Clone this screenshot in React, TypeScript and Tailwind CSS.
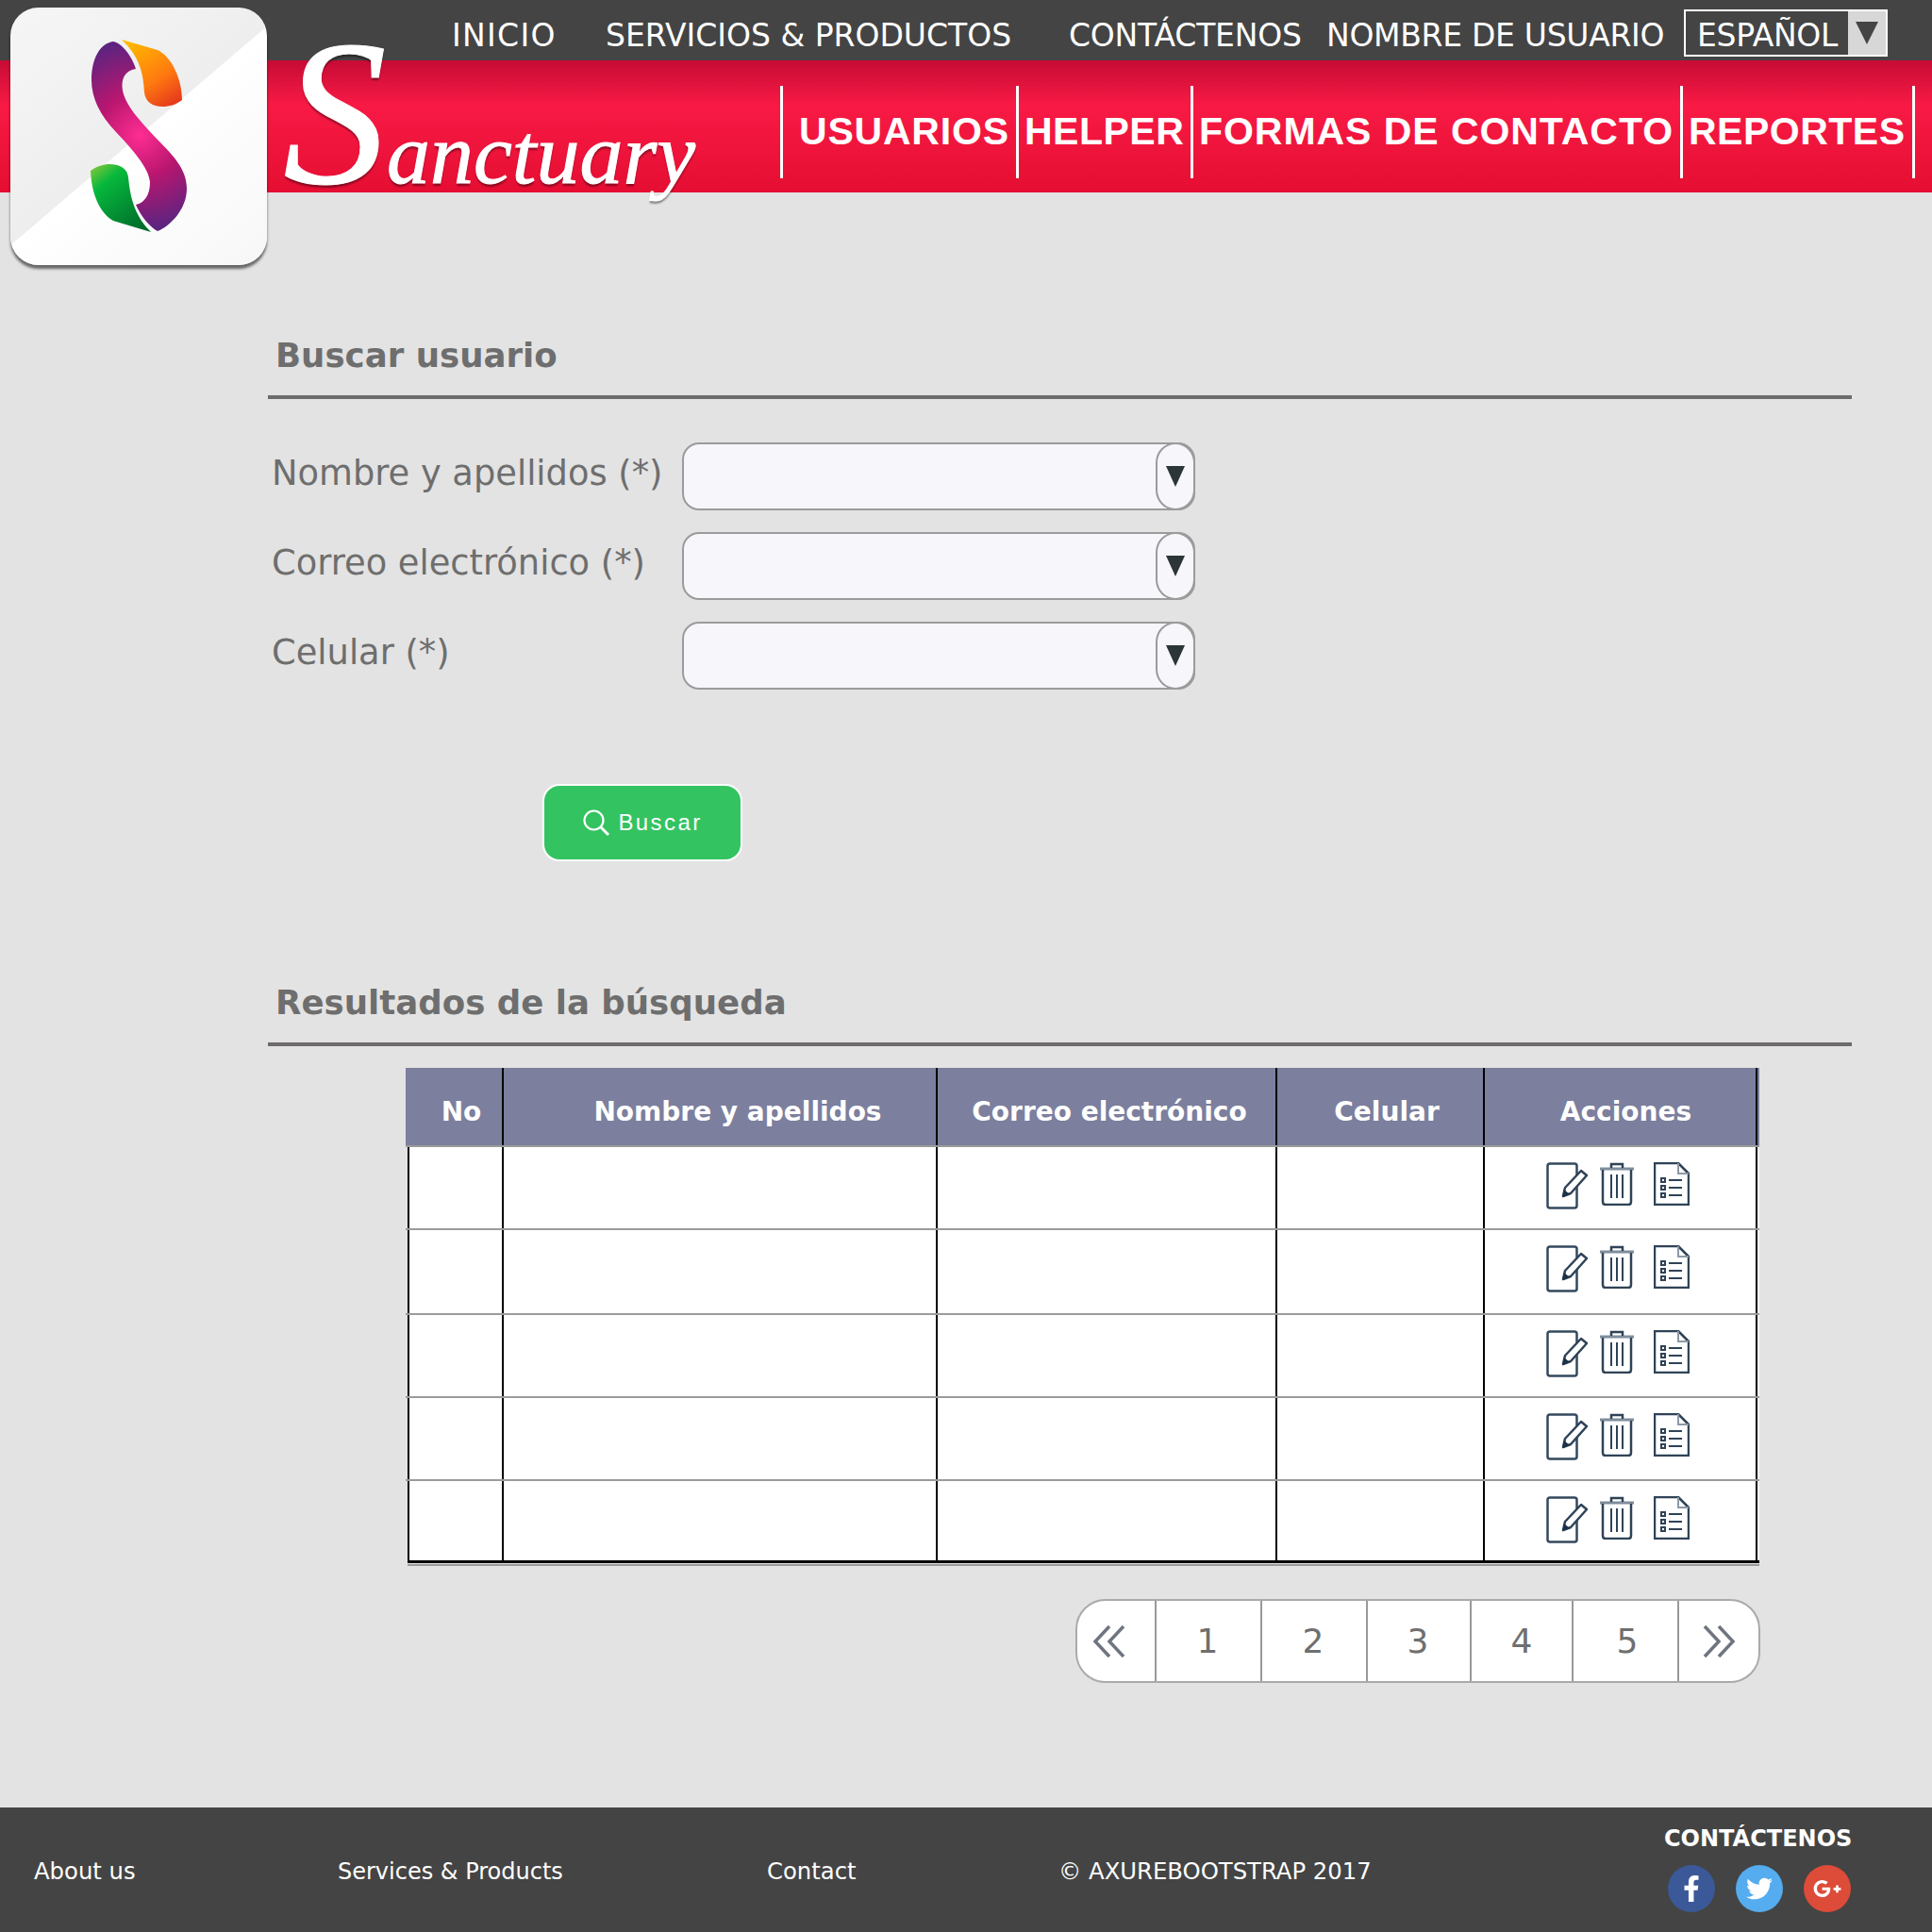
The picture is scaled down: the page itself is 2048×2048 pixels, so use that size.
import React from 'react';
import { FaFacebookF, FaTwitter, FaGooglePlusG } from 'react-icons/fa';

const sans = "font-['DejaVu_Sans',sans-serif]";

const LogoCard = () => (
  <div className="absolute left-[11px] top-[8px] w-[272px] h-[273px] rounded-[30px] bg-[linear-gradient(139.5deg,#f6f6f6_0%,#eeeeee_49.8%,#ffffff_50%,#f7f7f7_100%)] shadow-[0_4px_3px_rgba(0,0,0,0.55)] z-10">
    <svg width="272" height="272" viewBox="11 8 272 272">
      <defs>
        <radialGradient id="body" gradientUnits="userSpaceOnUse" cx="148" cy="143" r="100">
          <stop offset="0" stopColor="#ff2d92" />
          <stop offset="0.45" stopColor="#b9166f" />
          <stop offset="1" stopColor="#5c2480" />
        </radialGradient>
        <linearGradient id="orange" x1="0.2" y1="0" x2="0.8" y2="1">
          <stop offset="0" stopColor="#ffb800" />
          <stop offset="0.6" stopColor="#ff7a10" />
          <stop offset="1" stopColor="#e63a1c" />
        </linearGradient>
        <linearGradient id="green" x1="0.1" y1="0" x2="0.8" y2="1">
          <stop offset="0" stopColor="#7cc63a" />
          <stop offset="0.25" stopColor="#06b83c" />
          <stop offset="1" stopColor="#006a2b" />
        </linearGradient>
      </defs>
      <path d="M120 44 C130 46 140 60 144 73 C132 75 128 84 130 96 C133 112 150 130 166 147 C185 166 198 180 198 200 C198 222 180 240 167 245 C158 240 150 230 144 217 C153 215 159 207 159 193 C158 178 140 158 123 140 C106 122 97 104 97 85 C97 62 106 46 120 44 Z" fill="url(#body)" />
      <path d="M129 42 L167 53 C182 60 193 84 193 106 C186 111 180 113 172 113 C162 113 154 108 153 98 C152 78 148 60 129 42 Z" fill="url(#orange)" />
      <path d="M160 246 L120 234 C106 226 97 206 96 181 C103 176 110 174 116 174 C126 174 135 178 136 188 C138 208 142 228 160 246 Z" fill="url(#green)" />
    </svg>
  </div>
);

const EditIcon = () => (
  <svg width="46" height="50" viewBox="0 0 46 50" fill="none">
    <rect x="1.5" y="1.5" width="31" height="47" rx="2.5" stroke="#34495e" strokeWidth="2.5" />
    <path d="M20 27 L37 9 L43 14 L26 33 L18 36 Z" fill="#fff" stroke="#2f4358" strokeWidth="2.5" strokeLinejoin="round" />
    <path d="M17 37 L19 29 L25 34 Z" fill="#1c3148" />
  </svg>
);

const TrashIcon = () => (
  <svg width="38" height="46" viewBox="0 0 38 46" fill="none" stroke="#2f4358" strokeWidth="2.5">
    <path d="M1 7 H37" strokeWidth="3" stroke="#7f8d9b" />
    <path d="M13 6 V2 H25 V6" />
    <path d="M4 8 V42 Q4 45 7 45 H31 Q34 45 34 42 V8" />
    <path d="M13 13 V38 M19 13 V38 M25 13 V38" strokeWidth="2" />
  </svg>
);

const ListDocIcon = () => (
  <svg width="38" height="46" viewBox="0 0 38 46" fill="none" stroke="#2f4358" strokeWidth="2.5">
    <path d="M1 1 H26 L37 12 V45 H1 Z" strokeLinejoin="round" />
    <path d="M26 1 V12 H37" stroke="#8d99a5" strokeWidth="2" />
    <rect x="8" y="17" width="4" height="4" strokeWidth="2" />
    <rect x="8" y="25" width="4" height="4" strokeWidth="2" />
    <rect x="8" y="33" width="4" height="4" strokeWidth="2" />
    <path d="M16 19 H30 M16 27 H30 M16 35 H30" strokeWidth="2" />
  </svg>
);

const DoubleChevron = ({ dir }: { dir: 'left' | 'right' }) => (
  <svg width="36" height="36" viewBox="0 0 36 36" fill="none" stroke="#6f7580" strokeWidth="3.5" className={dir === 'right' ? 'rotate-180' : ''}>
    <path d="M18 2 L3 18 L18 34" />
    <path d="M33 2 L18 18 L33 34" />
  </svg>
);

const Field = ({ label }: { label: string }) => (
  <div className="flex items-center h-[71px]">
    <label className={`w-[439px] pl-[4px] text-[36.8px] leading-none text-[#6e6e6e] -mt-[4px] ${sans}`}>{label}</label>
    <div className="relative w-[544px] h-[72px] rounded-[18px] border-2 border-[#9b9b9b] bg-[#f6f6fb]">
      <div className="absolute -right-[2px] -top-[2px] w-[42px] h-[72px] rounded-[50%/30%] border-2 border-[#9b9b9b] bg-[#f6f6fb] flex items-center justify-center">
        <svg width="22" height="24" viewBox="0 0 22 24"><path d="M1 1 H21 L11 23 Z" fill="#2c3538" /></svg>
      </div>
    </div>
  </div>
);

const SectionTitle = ({ children }: { children: React.ReactNode }) => (
  <h2 className={`pl-[8px] pb-[15px] border-b-4 border-[#6d6b6b] text-[35.6px] leading-[54px] font-bold text-[#6e6e6e] ${sans}`}>{children}</h2>
);

const headers = [
  { label: 'No', cls: 'w-[104px] pl-[16px]' },
  { label: 'Nombre y apellidos', cls: 'w-[460px] pl-[38px]' },
  { label: 'Correo electrónico', cls: 'w-[360px] pl-[6px]' },
  { label: 'Celular', cls: 'w-[220px] pl-[14px]' },
  { label: 'Acciones', cls: 'w-[289px] pl-[12px]' },
];

const rows = ['h-[86px]', 'h-[88px]', 'h-[86px]', 'h-[86px]'];

const Row = ({ cls }: { cls: string }) => (
  <div className={`flex ml-[2px] bg-white ${cls}`}>
    <div className="w-[102px] border-l-2 border-r-2 border-black" />
    <div className="w-[460px] border-r-2 border-black" />
    <div className="w-[360px] border-r-2 border-black" />
    <div className="w-[220px] border-r-2 border-black" />
    <div className="w-[289px] border-r-2 border-black flex items-start justify-center pt-[16px] pr-[5px]">
      <EditIcon />
      <div className="ml-[10px]"><TrashIcon /></div>
      <div className="ml-[20px]"><ListDocIcon /></div>
    </div>
  </div>
);

export default function App() {
  return (
    <div className="relative w-[2048px] h-[2048px] flex flex-col bg-[#e3e3e3] overflow-hidden">
      {/* top bar */}
      <div className={`h-[64px] bg-[#444444] flex items-center pl-[479px] pt-[6px] text-white text-[33px] leading-none ${sans}`}>
        <span className="w-[163px] pt-[4px] tracking-[1.3px]">INICIO</span>
        <span className="w-[491px] pt-[4px]">SERVICIOS &amp; PRODUCTOS</span>
        <span className="w-[273px] pt-[4px] tracking-[-0.2px]">CONTÁCTENOS</span>
        <span className="w-[379px] pt-[4px] tracking-[-0.3px]">NOMBRE DE USUARIO</span>
        <div className="flex items-center w-[216px] h-[50px] border-2 border-white">
          <span className="w-[172px] pl-[12px] pt-[4px] tracking-[-0.3px]">ESPAÑOL</span>
          <div className="w-[40px] h-[46px] bg-[#d7d7d7] flex items-center justify-center">
            <svg width="26" height="26" viewBox="0 0 26 26"><path d="M1 1 H25 L13 25 Z" fill="#444444" /></svg>
          </div>
        </div>
      </div>

      {/* red band */}
      <div className="relative h-[140px] bg-[linear-gradient(180deg,#c60c35_0%,#f81a45_34%,#e50e32_100%)] pl-[827px] pt-[27px]">
        <div className="absolute left-[300px] top-[-24px] h-[160px] flex items-baseline italic text-white font-['Liberation_Serif',serif] [-webkit-text-stroke:1px_white] [text-shadow:0_3px_2px_rgba(0,0,0,0.4)] z-10">
          <span className="text-[220px] leading-[160px]">S</span>
          <span className="text-[92px] leading-[160px]">anctuary</span>
        </div>
        <div className="flex h-[98px] font-['Liberation_Sans',sans-serif] font-bold text-white text-[41px] leading-none border-r-[3px] border-white w-[1203px]">
          <div className="w-[250px] border-l-[3px] border-white pl-[17px] pb-[2px] flex items-center tracking-[0.8px]">USUARIOS</div>
          <div className="w-[185px] border-l-[3px] border-white pl-[6px] pb-[2px] flex items-center tracking-[0.5px]">HELPER</div>
          <div className="w-[519px] border-l-[3px] border-white pl-[6px] pb-[2px] flex items-center tracking-[0.95px]">FORMAS DE CONTACTO</div>
          <div className="w-[246px] border-l-[3px] border-white pl-[6px] pb-[2px] flex items-center tracking-[0.5px]">REPORTES</div>
        </div>
      </div>
      <LogoCard />

      {/* main */}
      <main className="flex-1 pl-[284px] pr-[85px] pt-[146px]">
        <SectionTitle>Buscar usuario</SectionTitle>
        <div className="mt-[46px] flex flex-col gap-[24px]">
          <Field label="Nombre y apellidos (*)" />
          <Field label="Correo electrónico (*)" />
          <Field label="Celular (*)" />
        </div>
        <button className="mt-[101px] ml-[291px] w-[212px] h-[82px] rounded-[18px] border-2 border-white bg-[#34c361] text-white flex items-center justify-center gap-[8px] font-['Liberation_Sans',sans-serif] text-[24px] tracking-[2.4px]">
          <svg width="30" height="30" viewBox="0 0 30 30" fill="none" stroke="#fff" strokeWidth="2.2">
            <circle cx="12.5" cy="12.5" r="10" />
            <path d="M20 20 L28 28" strokeWidth="3" />
          </svg>
          Buscar
        </button>

        <div className="mt-[123px]">
          <SectionTitle>Resultados de la búsqueda</SectionTitle>
        </div>

        {/* table */}
        <div className="mt-[23px] ml-[146px] w-[1435px]">
          <div className="flex h-[84px] bg-[#7c7f9e] border-b-2 border-[#9b9b9b]">
            {headers.map((h) => (
              <div key={h.label} className={`${h.cls} border-r-2 border-black flex items-center justify-center pt-[12px] text-white font-bold text-[28px] leading-none ${sans}`}>
                {h.label}
              </div>
            ))}
          </div>
          {rows.map((cls, i) => (
            <div key={i} className="border-b-2 border-[#9b9b9b]">
              <Row cls={cls} />
            </div>
          ))}
          <Row cls="h-[84px]" />
          <div className="ml-[2px] h-[3px] bg-black" />
          <div className="ml-[2px] mt-[1px] h-[2px] bg-[#9b9b9b]" />
        </div>

        {/* pagination */}
        <div className={`mt-[35px] ml-[856px] w-[726px] h-[89px] flex rounded-[32px] border-2 border-[#aaaaaa] bg-white text-[36px] text-[#6f6f6f] ${sans}`}>
          <div className="w-[84px] border-r-2 border-[#999999] flex items-center justify-center pr-[14px]"><DoubleChevron dir="left" /></div>
          <div className="w-[112px] border-r-2 border-[#999999] flex items-center justify-center pr-[2px]">1</div>
          <div className="w-[112px] border-r-2 border-[#999999] flex items-center justify-center pr-[2px]">2</div>
          <div className="w-[110px] border-r-2 border-[#999999] flex items-center justify-center pr-[2px]">3</div>
          <div className="w-[108px] border-r-2 border-[#999999] flex items-center justify-center">4</div>
          <div className="w-[112px] border-r-2 border-[#999999] flex items-center justify-center pl-[4px]">5</div>
          <div className="flex-1 flex items-center justify-center"><DoubleChevron dir="right" /></div>
        </div>
      </main>

      {/* footer */}
      <footer className={`h-[132px] bg-[#444444] flex text-white text-[24.3px] leading-none pl-[36px] ${sans}`}>
        <span className="w-[322px] pt-[56px]">About us</span>
        <span className="w-[455px] pt-[56px] text-[24px]">Services &amp; Products</span>
        <span className="w-[309px] pt-[56px]">Contact</span>
        <span className="w-[642px] pt-[56px]">© AXUREBOOTSTRAP 2017</span>
        <div className="pt-[21px]">
          <div className="font-bold text-[24px]">CONTÁCTENOS</div>
          <div className="mt-[16px] flex gap-[22px] pl-[4px]">
            <span className="w-[50px] h-[50px] rounded-full bg-[#3b5998] flex items-center justify-center"><FaFacebookF size={28} /></span>
            <span className="w-[50px] h-[50px] rounded-full bg-[#55acee] flex items-center justify-center"><FaTwitter size={28} /></span>
            <span className="w-[50px] h-[50px] rounded-full bg-[#dd4b39] flex items-center justify-center"><FaGooglePlusG size={30} /></span>
          </div>
        </div>
      </footer>
    </div>
  );
}
